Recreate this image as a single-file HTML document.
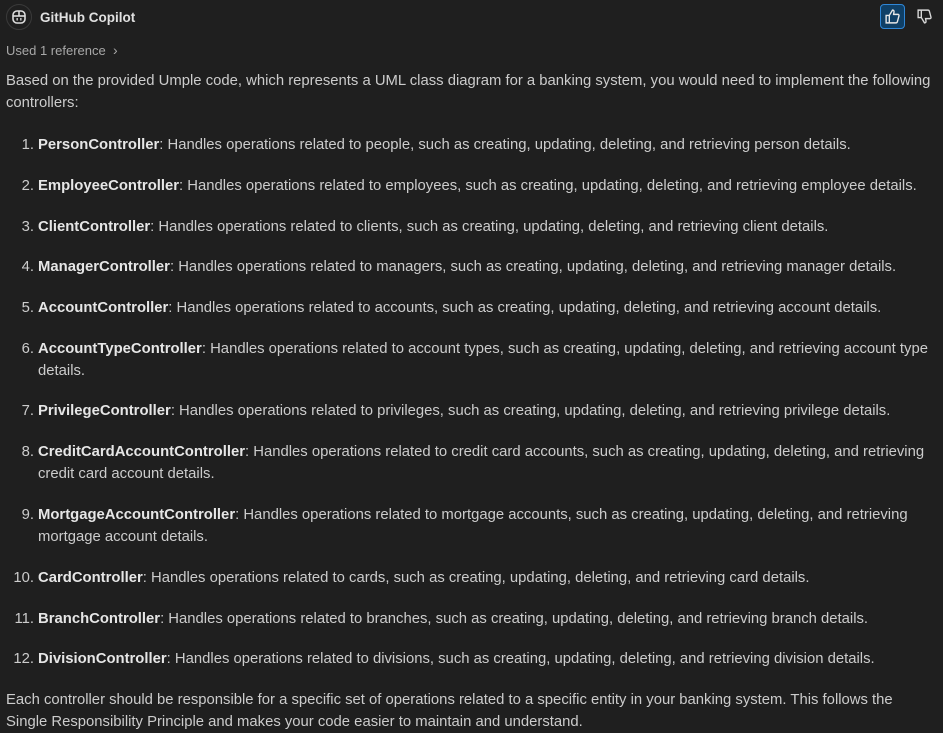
<!DOCTYPE html>
<html><head><meta charset="utf-8"><style>
body{margin:0;background:#1f1f1f;color:#cccccc;font-family:"Liberation Sans",sans-serif;font-size:14.85px;width:943px;height:732px;overflow:hidden;position:relative}
.hdr{position:absolute;top:3px;left:6px;height:28px;display:flex;align-items:center}
.av{width:26px;height:26px;border-radius:50%;border:1px solid #3a3a3a;display:flex;align-items:center;justify-content:center;box-sizing:border-box}
.name{margin-left:8px;font-weight:bold;color:#e0e0e0;font-size:13.5px}
.ref{position:absolute;top:42px;left:6px;font-size:13px;color:#a8a8a8}
.l{position:absolute;left:6px;white-space:nowrap;line-height:22px}
.n{position:absolute;width:34px;text-align:right;left:0}
.t{position:absolute;left:38px;white-space:nowrap;line-height:22px}
b{color:#e6e6e6}
.up{position:absolute;left:880px;top:4px;width:25px;height:25px;border:1px solid #2f86d6;background:#0f3f66;border-radius:4px;box-sizing:border-box;display:flex;align-items:center;justify-content:center}
.dn{position:absolute;left:912px;top:4px;width:25px;height:25px;display:flex;align-items:center;justify-content:center}
</style></head><body>
<div class="hdr"><div class="av"><svg width="16" height="14" viewBox="0 0 16 14"><rect x="2" y="1" width="12" height="12" rx="4" fill="none" stroke="#ddd" stroke-width="1.6"/><line x1="8" y1="1" x2="8" y2="6" stroke="#ddd" stroke-width="1.6"/><line x1="2" y1="6" x2="14" y2="6" stroke="#ddd" stroke-width="1.6"/><rect x="5.5" y="8" width="1.3" height="2.5" fill="#ddd"/><rect x="9.2" y="8" width="1.3" height="2.5" fill="#ddd"/></svg></div><span class="name">GitHub Copilot</span></div>
<div class="ref">Used 1 reference &nbsp;<span style="font-size:14px">&#x203A;</span></div>
<div class="up"><svg width="17" height="17" viewBox="0 0 16 16" fill="none" stroke="#e6e6e6" stroke-width="1.3"><path d="M2 7h3v7H2zM5 7l3-5c1 0 1.6.6 1.4 1.8L9 6h4c.8 0 1.3.7 1.1 1.4l-1.5 5.5c-.2.7-.7 1.1-1.4 1.1H5"/></svg></div>
<div class="dn"><svg width="17" height="17" viewBox="0 0 16 16" fill="none" stroke="#d8d8d8" stroke-width="1.3"><path d="M2 2h3v7H2zM5 9l3 5c1 0 1.6-.6 1.4-1.8L9 10h4c.8 0 1.3-.7 1.1-1.4L12.6 3.1C12.4 2.4 11.9 2 11.2 2H5"/></svg></div>

<div class="l" style="top:70px">Based on the provided Umple code, which represents a UML class diagram for a banking system, you would need to implement the following</div>
<div class="l" style="top:92px">controllers:</div>

<div class="l" style="top:134px;left:0"><span class="n">1.</span><span class="t"><b>PersonController</b>: Handles operations related to people, such as creating, updating, deleting, and retrieving person details.</span></div>
<div class="l" style="top:175px;left:0"><span class="n">2.</span><span class="t"><b>EmployeeController</b>: Handles operations related to employees, such as creating, updating, deleting, and retrieving employee details.</span></div>
<div class="l" style="top:216px;left:0"><span class="n">3.</span><span class="t"><b>ClientController</b>: Handles operations related to clients, such as creating, updating, deleting, and retrieving client details.</span></div>
<div class="l" style="top:256px;left:0"><span class="n">4.</span><span class="t"><b>ManagerController</b>: Handles operations related to managers, such as creating, updating, deleting, and retrieving manager details.</span></div>
<div class="l" style="top:297px;left:0"><span class="n">5.</span><span class="t"><b>AccountController</b>: Handles operations related to accounts, such as creating, updating, deleting, and retrieving account details.</span></div>
<div class="l" style="top:338px;left:0"><span class="n">6.</span><span class="t"><b>AccountTypeController</b>: Handles operations related to account types, such as creating, updating, deleting, and retrieving account type<br>details.</span></div>
<div class="l" style="top:400px;left:0"><span class="n">7.</span><span class="t"><b>PrivilegeController</b>: Handles operations related to privileges, such as creating, updating, deleting, and retrieving privilege details.</span></div>
<div class="l" style="top:441px;left:0"><span class="n">8.</span><span class="t"><b>CreditCardAccountController</b>: Handles operations related to credit card accounts, such as creating, updating, deleting, and retrieving<br>credit card account details.</span></div>
<div class="l" style="top:504px;left:0"><span class="n">9.</span><span class="t"><b>MortgageAccountController</b>: Handles operations related to mortgage accounts, such as creating, updating, deleting, and retrieving<br>mortgage account details.</span></div>
<div class="l" style="top:567px;left:0"><span class="n">10.</span><span class="t"><b>CardController</b>: Handles operations related to cards, such as creating, updating, deleting, and retrieving card details.</span></div>
<div class="l" style="top:608px;left:0"><span class="n">11.</span><span class="t"><b>BranchController</b>: Handles operations related to branches, such as creating, updating, deleting, and retrieving branch details.</span></div>
<div class="l" style="top:648px;left:0"><span class="n">12.</span><span class="t"><b>DivisionController</b>: Handles operations related to divisions, such as creating, updating, deleting, and retrieving division details.</span></div>

<div class="l" style="top:689px">Each controller should be responsible for a specific set of operations related to a specific entity in your banking system. This follows the</div>
<div class="l" style="top:711px">Single Responsibility Principle and makes your code easier to maintain and understand.</div>
</body></html>
